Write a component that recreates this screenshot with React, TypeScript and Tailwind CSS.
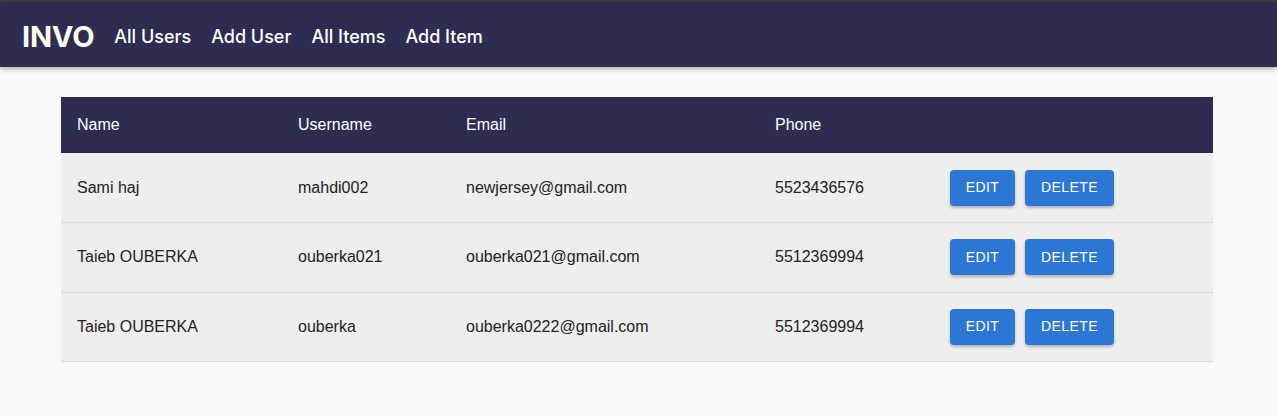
import React from "react";

const users = [
  { name: "Sami haj", username: "mahdi002", email: "newjersey@gmail.com", phone: "5523436576" },
  { name: "Taieb OUBERKA", username: "ouberka021", email: "ouberka021@gmail.com", phone: "5512369994" },
  { name: "Taieb OUBERKA", username: "ouberka", email: "ouberka0222@gmail.com", phone: "5512369994" },
];

export default function App() {
  return (
    <div className="min-h-[417px] bg-[#f8f9fb]" style={{ fontFamily: "'Liberation Sans', Arial, sans-serif" }}>
      <div className="h-[2px] bg-[#3c3c3c]" />
      <nav className="h-[65px] bg-[#2c2d50] flex items-center pl-[22px] pt-[4px] gap-[20px] shadow-[0_2px_5px_rgba(0,0,0,0.3)] relative text-white font-['Inter',sans-serif]">
        <span className="text-[29px] font-bold tracking-[-0.2px] text-[#fffdf0]">INVO</span>
        <div className="flex items-center gap-[20px] text-[18px] font-medium">
          <span>All Users</span>
          <span>Add User</span>
          <span>All Items</span>
          <span>Add Item</span>
        </div>
      </nav>
      <div className="px-[61px] pt-[30px]">
        <table className="w-[1152px] border-collapse text-[16px] text-[#222]">
          <thead>
            <tr className="bg-[#2c2d50] text-white h-[56px] text-left">
              <th className="font-medium pl-[16px] w-[221px]">Name</th>
              <th className="font-medium pl-[16px] w-[168px]">Username</th>
              <th className="font-medium pl-[16px] w-[309px]">Email</th>
              <th className="font-medium pl-[16px] w-[175px]">Phone</th>
              <th></th>
            </tr>
          </thead>
          <tbody>
            {users.map((u, i) => (
              <tr key={i} className="bg-[#eeeeee] h-[69.5px] border-b border-[#dcdcdc]">
                <td className="pl-[16px]">{u.name}</td>
                <td className="pl-[16px]">{u.username}</td>
                <td className="pl-[16px]">{u.email}</td>
                <td className="pl-[16px]">{u.phone}</td>
                <td className="pl-[16px]">
                  <div className="flex gap-[10px]">
                    <button className="w-[65px] h-[36px] rounded-[4px] bg-[#2c77d3] text-white text-[14px] uppercase tracking-[0.4px] shadow-[0_2px_3px_rgba(0,0,0,0.25)]">Edit</button>
                    <button className="w-[89px] h-[36px] rounded-[4px] bg-[#2c77d3] text-white text-[14px] uppercase tracking-[0.4px] shadow-[0_2px_3px_rgba(0,0,0,0.25)]">Delete</button>
                  </div>
                </td>
              </tr>
            ))}
          </tbody>
        </table>
      </div>
    </div>
  );
}
